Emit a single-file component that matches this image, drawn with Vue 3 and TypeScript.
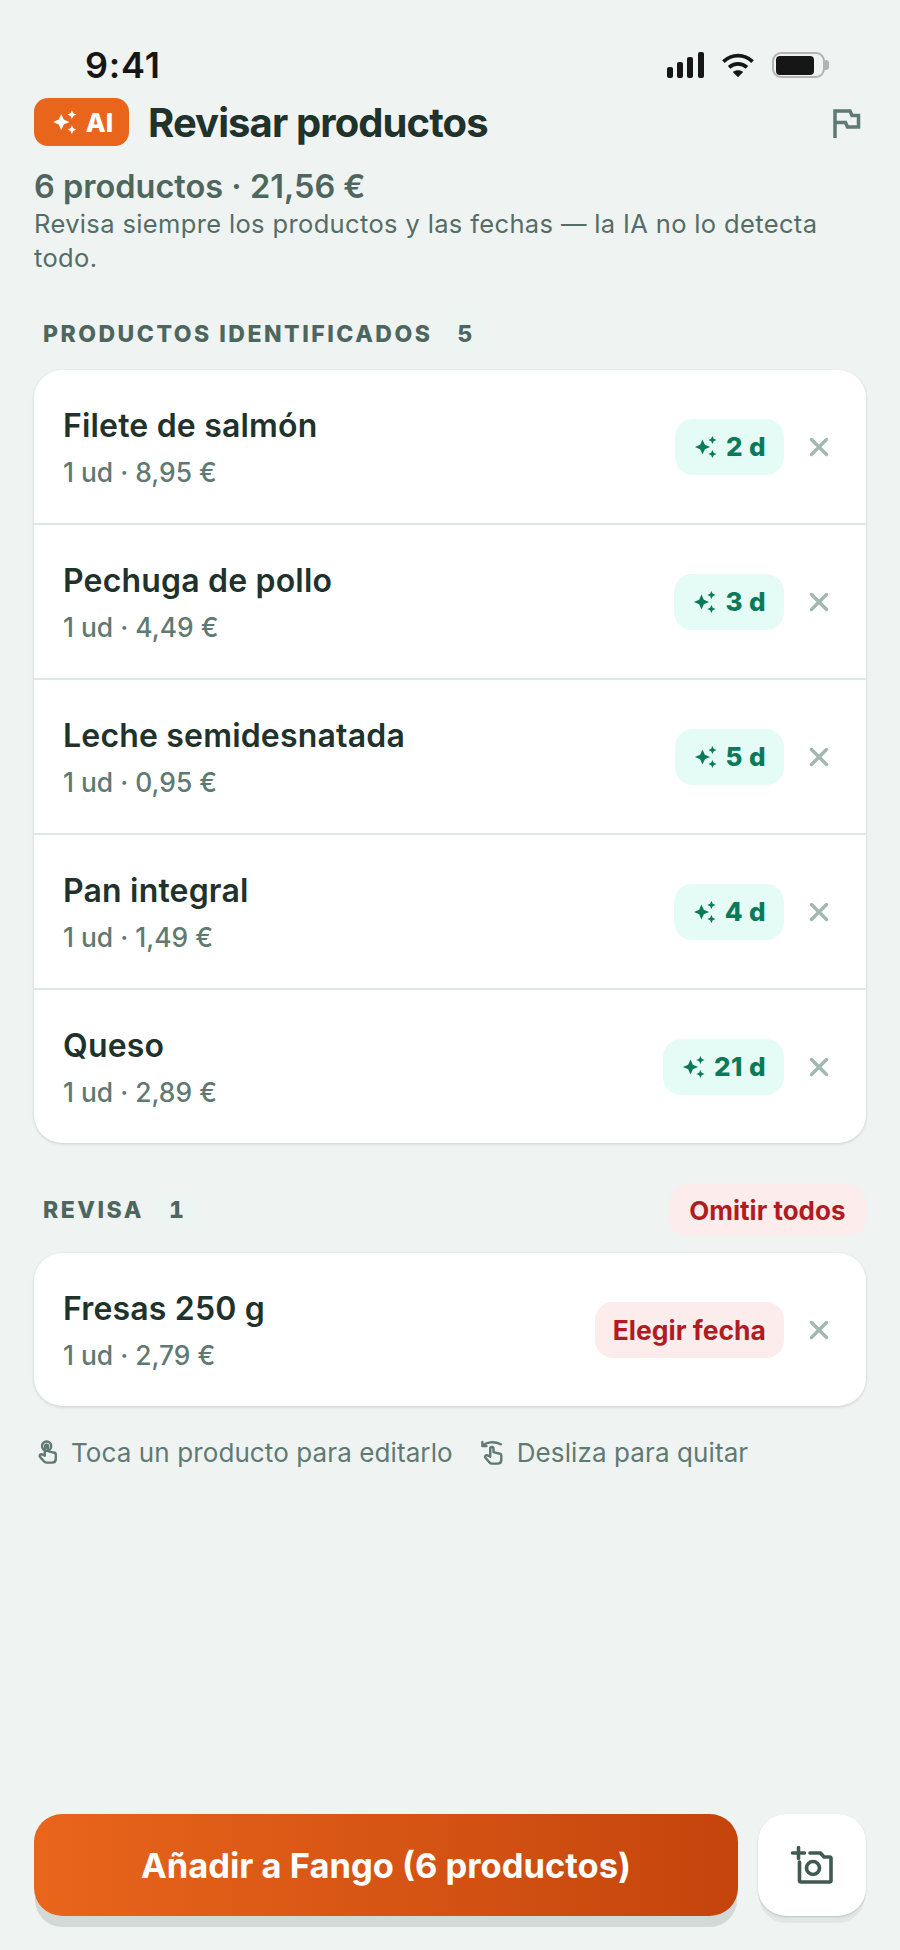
<script setup lang="ts">
interface Producto {
  nombre: string
  detalle: string
  dias: string
}

const identificados: Producto[] = [
  { nombre: 'Filete de salmón', detalle: '1 ud · 8,95 €', dias: '2 d' },
  { nombre: 'Pechuga de pollo', detalle: '1 ud · 4,49 €', dias: '3 d' },
  { nombre: 'Leche semidesnatada', detalle: '1 ud · 0,95 €', dias: '5 d' },
  { nombre: 'Pan integral', detalle: '1 ud · 1,49 €', dias: '4 d' },
  { nombre: 'Queso', detalle: '1 ud · 2,89 €', dias: '21 d' },
]

const sparkle =
  'M9 5.500l2 4.500 4.500 2-4.500 2-2 4.500-2-4.500-4.500-2 4.500-2zM17.500 2.500l1.100 2.400 2.400 1.100-2.400 1.100-1.100 2.400-1.100-2.400-2.400-1.100 2.400-1.100zM17.500 14.500l1.100 2.400 2.400 1.100-2.400 1.100-1.100 2.400-1.100-2.400-2.400-1.100 2.400-1.100z'
</script>

<template>
  <div class="pantalla">
    <div class="status">
      <span class="hora">9:41</span>
      <div class="status-icons">
        <svg width="37" height="26" viewBox="0 0 37 26">
          <rect x="0" y="15" width="6" height="11" rx="2" />
          <rect x="10" y="10" width="6" height="16" rx="2" />
          <rect x="20" y="5" width="6" height="21" rx="2" />
          <rect x="31" y="0" width="6" height="26" rx="2" />
        </svg>
        <svg width="32" height="26" viewBox="0 0 34 26" fill="none" stroke="#161616" stroke-width="4">
          <path d="M1.500 9.500C10.500 1 23.500 1 32.500 9.500" />
          <path d="M7.500 15.500C13 10.500 21 10.500 26.500 15.500" />
          <path d="M17 26l-5.500-5.500c3-2.600 8-2.600 11 0z" fill="#161616" stroke="none" />
        </svg>
        <div class="bateria">
          <div class="bateria-cuerpo"><div class="bateria-nivel"></div></div>
          <div class="bateria-punta"></div>
        </div>
      </div>
    </div>

    <div class="cabecera">
      <div class="ai-badge">
        <svg width="30" height="30" viewBox="0 0 24 24" fill="#fff"><path :d="sparkle" /></svg>
        <span>AI</span>
      </div>
      <h1>Revisar productos</h1>
      <svg class="bandera" width="32" height="32" viewBox="0 0 32 32" fill="none" stroke="#5f7a72" stroke-width="3.500">
        <path d="M2 30V3h15l2 4.500h6.500V19H14.500l-2-4.500H2" />
      </svg>
    </div>

    <p class="resumen">6 productos · 21,56 €</p>
    <p class="aviso">Revisa siempre los productos y las fechas — la IA no lo detecta todo.</p>

    <div class="seccion">
      <span class="seccion-titulo">PRODUCTOS IDENTIFICADOS</span>
      <span class="seccion-num">5</span>
    </div>

    <div class="card">
      <div v-for="p in identificados" :key="p.nombre" class="fila">
        <div class="fila-texto">
          <div class="nombre">{{ p.nombre }}</div>
          <div class="detalle">{{ p.detalle }}</div>
        </div>
        <div class="chip-dias">
          <svg width="28" height="28" viewBox="0 0 24 24" fill="#0b7a5a"><path :d="sparkle" /></svg>
          <span>{{ p.dias }}</span>
        </div>
        <svg class="cerrar" width="22" height="22" viewBox="0 0 22 22" stroke="#a3b8b1" stroke-width="3.500" stroke-linecap="round">
          <path d="M3.500 3.500l15 15M18.500 3.500l-15 15" />
        </svg>
      </div>
    </div>

    <div class="seccion seccion-revisa">
      <span class="seccion-titulo">REVISA</span>
      <span class="seccion-num">1</span>
      <button class="omitir">Omitir todos</button>
    </div>

    <div class="card card-revisa">
      <div class="fila">
        <div class="fila-texto">
          <div class="nombre">Fresas 250 g</div>
          <div class="detalle">1 ud · 2,79 €</div>
        </div>
        <div class="chip-fecha">Elegir fecha</div>
        <svg class="cerrar" width="22" height="22" viewBox="0 0 22 22" stroke="#a3b8b1" stroke-width="3.500" stroke-linecap="round">
          <path d="M3.500 3.500l15 15M18.500 3.500l-15 15" />
        </svg>
      </div>
    </div>

    <div class="ayuda">
      <div class="ayuda-item">
        <svg width="22" height="26" viewBox="0 0 24 28" fill="none" stroke="#5f7a72" stroke-width="2.600" stroke-linecap="round" stroke-linejoin="round">
          <circle cx="10.500" cy="6.500" r="5" />
          <circle cx="10.500" cy="6.500" r="1.600" fill="#5f7a72" />
          <path d="M8.500 8v9l-3-1.500c-2-.8-3.500 1.500-2 3l4 4.500c.8 1 1.500 1.500 3 1.500h6c2.500 0 4-1.500 4-4v-4.500c0-1.500-1-2.500-2.500-2.500l-6-1.500V7.500" />
        </svg>
        <span>Toca un producto para editarlo</span>
      </div>
      <div class="ayuda-item">
        <svg width="24" height="26" viewBox="0 0 26 28" fill="none" stroke="#5f7a72" stroke-width="2.600" stroke-linecap="round" stroke-linejoin="round">
          <path d="M1.500 6.500C6 2 14 1 21.500 4.500M1.500 2v4.500H6" />
          <path d="M10 9v9l-3-1.500c-2-.8-3.500 1.500-2 3l4 4.500c.8 1 1.500 1.500 3 1.500h6c2.500 0 4-1.500 4-4v-4.500c0-1.500-1-2.500-2.500-2.500l-6-1.500V9c0-2-3.500-2-3.500 0z" />
        </svg>
        <span>Desliza para quitar</span>
      </div>
    </div>

    <div class="pie">
      <button class="btn-principal">Añadir a Fango (6 productos)</button>
      <button class="btn-camara">
        <svg width="44" height="44" viewBox="0 0 44 44" fill="none" stroke="#3f5a52" stroke-width="3.600" stroke-linecap="round" stroke-linejoin="round">
          <path d="M2.500 10h12M8.500 4.500v11" />
          <path d="M9.500 19v18.500c0 1 .5 1.500 1.500 1.500h28.500c1 0 1.500-.5 1.500-1.500V15.500c0-1-.5-1.500-1.500-1.500H34l-3.500-4H20" />
          <circle cx="23" cy="25" r="6.500" />
        </svg>
      </button>
    </div>
  </div>
</template>

<style>
html,
body {
  margin: 0;
  background: #eff3f2;
}
</style>

<style scoped>
.pantalla {
  position: relative;
  box-sizing: border-box;
  width: 900px;
  height: 1950px;
  padding: 0 34px;
  background: #eff3f2;
  font-family: Inter, 'Liberation Sans', sans-serif;
  color: #1f322c;
  overflow: hidden;
  display: flex;
  flex-direction: column;
}

.status {
  height: 98px;
  flex: none;
  display: flex;
  justify-content: space-between;
  align-items: flex-start;
  padding: 44px 37px 0 51px;
  box-sizing: border-box;
}
.hora {
  font-size: 36px;
  font-weight: 600;
  letter-spacing: 0.8px;
  line-height: 42px;
  color: #161616;
}
.status-icons {
  display: flex;
  align-items: center;
  gap: 18px;
  margin-top: 8px;
}
.status-icons svg rect {
  fill: #161616;
}
.bateria {
  display: flex;
  align-items: center;
}
.bateria-cuerpo {
  box-sizing: border-box;
  width: 53px;
  height: 26px;
  padding: 1.500px 9px 1.500px 2px;
  border: 2px solid #b3b3b3;
  border-radius: 9px;
}
.bateria-nivel {
  width: 100%;
  height: 100%;
  background: #161616;
  border-radius: 4px;
}
.bateria-punta {
  width: 4px;
  height: 10px;
  background: #b3b3b3;
  border-radius: 0 3px 3px 0;
}

.cabecera {
  flex: none;
  display: flex;
  align-items: center;
  height: 48px;
}
.ai-badge {
  display: flex;
  align-items: center;
  justify-content: center;
  gap: 6px;
  width: 95px;
  height: 48px;
  background: #e9651c;
  border-radius: 14px;
  color: #fff;
  font-size: 26px;
  font-weight: 800;
}
h1 {
  margin: 0 0 0 19px;
  font-size: 40px;
  font-weight: 700;
  letter-spacing: -0.9px;
  color: #1f322c;
  flex: 1;
}
.bandera {
  margin-right: 1px;
  margin-top: 4px;
}

.resumen {
  margin: 21px 0 0;
  font-size: 32.500px;
  line-height: 40px;
  font-weight: 600;
  color: #4d665e;
}
.aviso {
  margin: 0;
  font-size: 25.500px;
  line-height: 34px;
  letter-spacing: 0.36px;
  color: #546d65;
}

.seccion {
  flex: none;
  display: flex;
  align-items: center;
  height: 50px;
  margin-top: 34px;
  padding-left: 9px;
}
.seccion-titulo {
  font-size: 23px;
  font-weight: 800;
  letter-spacing: 2.500px;
  color: #4d665e;
}
.seccion-num {
  margin-left: 11px;
  padding: 4px 14px;
  border-radius: 20px;
  background: #edf5f3;
  font-size: 23px;
  font-weight: 800;
  font-variant-numeric: tabular-nums;
  color: #4d665e;
}

.card {
  flex: none;
  margin-top: 11px;
  background: #fff;
  border-radius: 28px;
  box-shadow: 0 1px 3px rgba(31, 50, 44, 0.18);
  overflow: hidden;
}
.card-revisa {
  margin-top: 17px;
}
.fila {
  box-sizing: border-box;
  height: 155px;
  display: flex;
  align-items: center;
  padding: 0 36px 0 29px;
  border-bottom: 2px solid #dde7e4;
}
.fila:last-child {
  height: 153px;
  border-bottom: none;
}
.fila-texto {
  flex: 1;
}
.nombre {
  font-size: 32px;
  font-weight: 600;
  letter-spacing: 0.18px;
  line-height: 38px;
  color: #1f322c;
}
.detalle {
  margin-top: 12px;
  font-size: 26.400px;
  font-weight: 500;
  line-height: 30px;
  color: #5f7a72;
}
.chip-dias {
  display: flex;
  align-items: center;
  gap: 6px;
  height: 56px;
  padding: 0 18px 0 17px;
  background: #e5fcf6;
  border-radius: 18px;
  font-size: 26px;
  font-weight: 800;
  letter-spacing: 0.4px;
  color: #0b7a5a;
}
.chip-fecha {
  display: flex;
  align-items: center;
  height: 56px;
  padding: 0 18px;
  background: #fdecec;
  border-radius: 18px;
  font-size: 26.500px;
  font-weight: 700;
  color: #b01c22;
}
.cerrar {
  margin-left: 24px;
}

.seccion-revisa {
  height: 52px;
  margin-top: 41px;
}
.omitir {
  margin-left: auto;
  height: 52px;
  padding: 0 20.500px;
  border: none;
  background: #fdecec;
  border-radius: 18px;
  font-family: inherit;
  font-size: 26px;
  font-weight: 700;
  color: #b01c22;
}

.ayuda {
  flex: none;
  display: flex;
  gap: 28px;
  margin-top: 31px;
  padding-left: 3px;
  font-size: 26px;
  letter-spacing: 0.1px;
  color: #5f7a72;
}
.ayuda-item {
  display: flex;
  align-items: center;
  gap: 12px;
}

.pie {
  flex: none;
  margin-top: auto;
  margin-bottom: 34px;
  display: flex;
  gap: 20px;
}
.btn-principal {
  flex: 1;
  height: 102px;
  border: none;
  border-radius: 28px;
  background: linear-gradient(90deg, #e9651c, #c4440c);
  box-shadow: 0 12px 0 -1px #d3d9d7;
  font-family: inherit;
  font-size: 34.500px;
  font-weight: 700;
  color: #fff;
}
.btn-camara {
  width: 108px;
  height: 102px;
  border: none;
  border-radius: 28px;
  background: #fff;
  box-shadow: 0 1px 2px rgba(31, 50, 44, 0.2), 0 8px 0 -1px #e2e7e5;
  display: flex;
  align-items: center;
  justify-content: center;
  padding: 0;
}
</style>
